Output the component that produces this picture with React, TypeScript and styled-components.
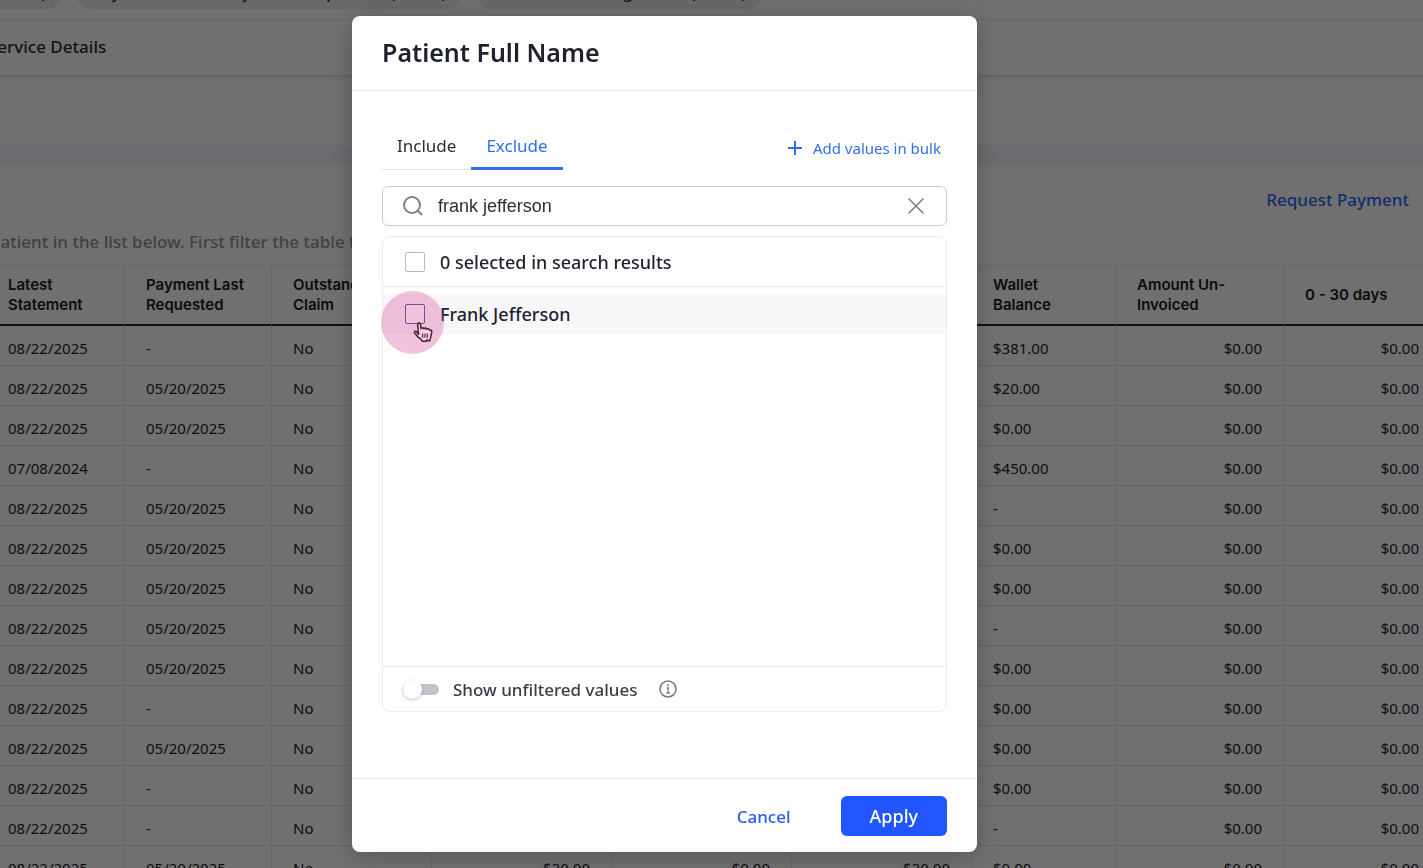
import React, { useState } from 'react';
import styled, { createGlobalStyle } from 'styled-components';

const GlobalStyle = createGlobalStyle`
  *, *::before, *::after { box-sizing: border-box; }
  html, body { margin: 0; height: 100%; }
  body {
    overflow: hidden;
    background: #fff;
    color: #1f222e;
    font-family: "Noto Sans", sans-serif;
    font-size: 15px;
  }
  button, input { font: inherit; color: inherit; }
  button { border: 0; background: none; padding: 0; cursor: pointer; }
`;

const Page = styled.div`
  height: 100vh;
  overflow: hidden;
`;

const Report = styled.main`
  margin-left: -13px;
`;

const ChipBar = styled.div`
  display: flex;
  align-items: flex-end;
  gap: 14px;
  height: 20px;
  padding-bottom: 10px;
  border-bottom: 1px solid #ececee;
`;

const Chip = styled.span`
  flex: none;
  height: 32px;
  padding: 0 15px;
  border-radius: 16px;
  background: #e9ecf1;
  font-size: 18px;
  line-height: 29px;
  white-space: nowrap;

  &:first-child {
    padding-left: 3px;
    border-radius: 0 16px 16px 0;
  }
`;

const SectionTabs = styled.nav`
  display: flex;
  align-items: center;
  height: 56px;
  padding-bottom: 2px;
  border-bottom: 1px solid #e2e2e4;
  box-shadow: 0 2px 4px rgba(0, 0, 0, 0.1);
`;

const SectionLink = styled.a`
  padding-left: 1px;
  color: #2b2e38;
  font-size: 17px;
  font-weight: 500;
  line-height: 24px;
  text-decoration: none;
`;

const Divider = styled.div`
  height: 20px;
  margin-top: 69px;
  background: #f2f4fb;
`;

const TableIntro = styled.header`
  display: flex;
  flex-direction: column;
  gap: 18px;
  padding: 23px 14px 11px 0;
`;

const RequestLink = styled.button`
  align-self: flex-end;
  color: #3563f5;
  font-size: 17px;
  font-weight: 500;
  line-height: 24px;
`;

const Hint = styled.p`
  margin: 0;
  padding-left: 3px;
  color: #949494;
  font-size: 17px;
  font-weight: 500;
  line-height: 24px;
  white-space: nowrap;
`;

const Table = styled.table`
  width: 1454px;
  table-layout: fixed;
  border-collapse: separate;
  border-spacing: 0;
  border-top: 1px solid #eaeaec;
`;

const HeadCell = styled.th`
  height: 60px;
  padding: 0 21px;
  border-right: 1px solid #e8eaed;
  border-bottom: 2px solid #222;
  color: #1c1c1c;
  font-family: Inter, sans-serif;
  font-size: 15px;
  font-weight: 600;
  line-height: 20px;
  text-align: left;
`;

const Cell = styled.td<{ $numeric?: boolean }>`
  height: 40px;
  padding: 5px 21px 0;
  border-right: 1px solid #e8eaed;
  border-bottom: 1px solid #e0e3e6;
  line-height: 20px;
  text-align: ${(p) => (p.$numeric ? 'right' : 'left')};
`;

const Backdrop = styled.div`
  position: fixed;
  inset: 0;
  display: flex;
  justify-content: center;
  padding: 16px 94px 16px 0;
  background: rgba(0, 0, 0, 0.56);
`;

const Dialog = styled.section`
  display: flex;
  flex-direction: column;
  width: 625px;
  border-radius: 8px;
  background: #fff;
  box-shadow: 0 4px 24px rgba(0, 0, 0, 0.25);
`;

const DialogHeader = styled.header`
  padding: 20px 30px 22px;
  border-bottom: 1px solid #ededf0;
`;

const DialogTitle = styled.h2`
  margin: 0;
  font-size: 25px;
  font-weight: 600;
  line-height: 32px;
`;

const DialogBody = styled.div`
  display: flex;
  flex: 1;
  flex-direction: column;
  min-height: 0;
  padding: 30px 30px 66px;
`;

const TabRow = styled.div`
  display: flex;
  align-items: flex-end;
  justify-content: space-between;
  margin-bottom: 16px;
`;

const TabList = styled.div`
  display: flex;
`;

const Tab = styled.button<{ $active: boolean }>`
  height: 49px;
  padding: 0 15px;
  box-shadow: inset 0 ${(p) => (p.$active ? '-3px #2f6fed' : '-1px #e4e5ea')};
  color: ${(p) => (p.$active ? '#2f6fed' : '#2b2e38')};
  font-size: 17px;
  line-height: 24px;
`;

const BulkButton = styled.button`
  display: flex;
  align-items: center;
  gap: 11px;
  margin: 0 6px 10px 0;
  color: #2f6fed;
  font-size: 15px;
  line-height: 24px;
`;

const SearchBox = styled.div`
  display: flex;
  flex: none;
  align-items: center;
  height: 40px;
  margin-bottom: 10px;
  padding: 0 20px 0 18px;
  border: 1px solid #c9cbd1;
  border-radius: 6px;
`;

const SearchInput = styled.input`
  flex: 1;
  min-width: 0;
  margin-left: 13px;
  padding: 0;
  border: 0;
  outline: 0;
  color: #2b2e38;
  font-family: "Liberation Sans", sans-serif;
  font-size: 18px;
`;

const ResultsPanel = styled.div`
  display: flex;
  flex: 1;
  flex-direction: column;
  min-height: 0;
  border: 1px solid #ededf0;
  border-radius: 8px;
`;

const SelectAllRow = styled.label`
  display: flex;
  align-items: center;
  gap: 15px;
  height: 50px;
  padding: 0 22px;
  border-bottom: 1px solid #ededf0;
  font-size: 18px;
  font-weight: 500;
`;

const Results = styled.ul`
  position: relative;
  flex: 1;
  margin: 0;
  padding: 7px 0 0;
  list-style: none;
`;

const ResultRow = styled.label`
  display: flex;
  align-items: center;
  gap: 15px;
  height: 40px;
  padding: 0 22px;
  background: #f7f7f9;
  font-size: 18px;
  font-weight: 500;
`;

const Checkbox = styled.input<{ $hovered?: boolean }>`
  appearance: none;
  flex: none;
  width: 20px;
  height: 20px;
  margin: 0;
  border: 1px solid ${(p) => (p.$hovered ? '#3c4796' : '#b9bbc3')};
  border-radius: 2px;
  background: #fff;

  &:checked { background: #2156ff; }
`;

const ClickHighlight = styled.li`
  position: absolute;
  top: 4px;
  left: -2px;
  width: 63px;
  height: 63px;
  padding: 30px 0 0 32px;
  border-radius: 50%;
  background: rgba(217, 83, 155, 0.35);
  pointer-events: none;
`;

const PanelFooter = styled.div`
  display: flex;
  align-items: center;
  height: 45px;
  padding: 0 20px;
  border-top: 1px solid #ededf0;
`;

const ToggleLabel = styled.label`
  display: flex;
  align-items: center;
  gap: 14px;
  margin-right: 20px;
  color: #3a3d47;
  font-size: 17px;
  font-weight: 500;
`;

const Toggle = styled.input`
  appearance: none;
  display: flex;
  align-items: center;
  width: 36px;
  height: 11px;
  margin: 0;
  border-radius: 6px;
  background: #bfc3cd;

  &::before {
    content: "";
    width: 19px;
    height: 19px;
    border-radius: 50%;
    background: #fff;
    box-shadow: 0 1px 3px rgba(40, 44, 70, 0.3);
  }
  &:checked { justify-content: flex-end; background: #2156ff; }
`;

const IconButton = styled.button`
  display: flex;
  color: #777b87;
`;

const DialogFooter = styled.footer`
  display: flex;
  justify-content: flex-end;
  gap: 24px;
  padding: 17px 30px 16px;
  border-top: 1px solid #ededf0;
`;

const FooterButton = styled.button<{ $primary?: boolean }>`
  height: 40px;
  padding: ${(p) => (p.$primary ? '0 29px' : '0 26px')};
  border-radius: 6px;
  background: ${(p) => (p.$primary ? '#2156ff' : 'transparent')};
  color: ${(p) => (p.$primary ? '#fff' : '#2a5bef')};
  font-size: ${(p) => (p.$primary ? '18px' : '17px')};
  font-weight: 500;
`;

const SearchIcon = () => (
  <svg width="24" height="24" viewBox="0 0 24 24" fill="none" stroke="#7c808c" strokeWidth="2" aria-hidden="true">
    <circle cx="11" cy="11" r="8" />
    <path d="M16.700 16.700 21 21" />
  </svg>
);

const CloseIcon = () => (
  <svg width="20" height="20" viewBox="0 0 20 20" fill="none" stroke="currentColor" strokeWidth="1.500" aria-hidden="true">
    <path d="M2.500 2.500 17.500 17.500M17.500 2.500 2.500 17.500" />
  </svg>
);

const PlusIcon = () => (
  <svg width="14" height="14" viewBox="0 0 14 14" fill="none" stroke="currentColor" strokeWidth="2" aria-hidden="true">
    <path d="M7 0v14M0 7h14" />
  </svg>
);

const InfoIcon = () => (
  <svg width="20" height="20" viewBox="0 0 20 20" fill="none" stroke="currentColor" strokeWidth="1.600" aria-hidden="true">
    <circle cx="10" cy="10" r="8" />
    <path d="M8.500 9H10.200V14M8.300 14h3.700" strokeWidth="1.300" />
    <circle cx="10" cy="6.200" r="1" fill="currentColor" stroke="none" />
  </svg>
);

const HandPointer = () => (
  <svg width="20" height="22" viewBox="0 0 20 22" fill="#f2cfe2" stroke="#4b1f3b" strokeWidth="1.500" strokeLinejoin="round" aria-hidden="true">
    <path d="M5.500 13.200 4.700 3.600C4.500 1.300 7 1 7.400 3.200L8.200 7.800C8.600 6.300 10.600 6.200 11 7.800 11.600 6.600 13.300 6.700 13.600 8.300 14.400 7.300 16.200 7.600 16.500 9.200 18 8.700 19 9.600 18.700 11.200L17.600 16.300 16.800 19.800 15 19.700 14.200 18.700 13.300 20.300H9.300L8 18.300 4.600 15.600 1.800 12.300C.6 10.500 2.400 9.500 3.700 10.800Z" />
    <path d="M9.700 12.500v4.200M12 12.500v4.200M14.300 12.500v4.200" fill="none" strokeWidth="1.100" />
  </svg>
);

const columns = [
  { label: 'Latest Statement', width: 138 },
  { label: 'Payment Last Requested', width: 147 },
  { label: 'Outstanding Claim', width: 160 },
  { label: '', width: 180, numeric: true },
  { label: '', width: 180, numeric: true },
  { label: '', width: 180, numeric: true },
  { label: 'Wallet Balance', width: 144 },
  { label: 'Amount Un-Invoiced', width: 168, numeric: true },
  { label: '0 - 30 days', width: 157, numeric: true },
];

const accounts: Array<[string, string, string, string[]?]> = [
  ['08/22/2025', '-', '$381.00'],
  ['08/22/2025', '05/20/2025', '$20.00'],
  ['08/22/2025', '05/20/2025', '$0.00'],
  ['07/08/2024', '-', '$450.00'],
  ['08/22/2025', '05/20/2025', '-'],
  ['08/22/2025', '05/20/2025', '$0.00'],
  ['08/22/2025', '05/20/2025', '$0.00'],
  ['08/22/2025', '05/20/2025', '-'],
  ['08/22/2025', '05/20/2025', '$0.00'],
  ['08/22/2025', '-', '$0.00'],
  ['08/22/2025', '05/20/2025', '$0.00'],
  ['08/22/2025', '-', '$0.00'],
  ['08/22/2025', '-', '-'],
  ['08/22/2025', '05/20/2025', '$0.00', ['$30.00', '$0.00', '$30.00']],
];

function AccountsTable() {
  return (
    <Table>
      <colgroup>
        {columns.map((c, i) => <col key={i} width={c.width} />)}
      </colgroup>
      <thead>
        <tr>{columns.map((c, i) => <HeadCell key={i} scope="col">{c.label}</HeadCell>)}</tr>
      </thead>
      <tbody>
        {accounts.map(([statement, requested, wallet, totals = ['', '', '']], r) => (
          <tr key={r}>
            {[statement, requested, 'No', ...totals, wallet, '$0.00', '$0.00'].map((value, i) => (
              <Cell key={i} $numeric={columns[i].numeric}>{value}</Cell>
            ))}
          </tr>
        ))}
      </tbody>
    </Table>
  );
}

function FilterDialog() {
  const [mode, setMode] = useState('Exclude');
  const [query, setQuery] = useState('frank jefferson');
  return (
    <Dialog role="dialog" aria-modal="true" aria-labelledby="filter-title">
      <DialogHeader>
        <DialogTitle id="filter-title">Patient Full Name</DialogTitle>
      </DialogHeader>
      <DialogBody>
        <TabRow>
          <TabList role="tablist">
            {['Include', 'Exclude'].map((name) => (
              <Tab key={name} role="tab" aria-selected={mode === name} $active={mode === name} onClick={() => setMode(name)}>
                {name}
              </Tab>
            ))}
          </TabList>
          <BulkButton><PlusIcon />Add values in bulk</BulkButton>
        </TabRow>
        <SearchBox>
          <SearchIcon />
          <SearchInput aria-label="Search values" value={query} onChange={(e) => setQuery(e.target.value)} />
          <IconButton aria-label="Clear search" onClick={() => setQuery('')}><CloseIcon /></IconButton>
        </SearchBox>
        <ResultsPanel>
          <SelectAllRow>
            <Checkbox type="checkbox" />
            0 selected in search results
          </SelectAllRow>
          <Results>
            <li>
              <ResultRow>
                <Checkbox type="checkbox" $hovered />
                Frank Jefferson
              </ResultRow>
            </li>
            <ClickHighlight aria-hidden="true"><HandPointer /></ClickHighlight>
          </Results>
          <PanelFooter>
            <ToggleLabel>
              <Toggle type="checkbox" role="switch" />
              Show unfiltered values
            </ToggleLabel>
            <IconButton aria-label="About unfiltered values"><InfoIcon /></IconButton>
          </PanelFooter>
        </ResultsPanel>
      </DialogBody>
      <DialogFooter>
        <FooterButton>Cancel</FooterButton>
        <FooterButton $primary>Apply</FooterButton>
      </DialogFooter>
    </Dialog>
  );
}

export default function App() {
  return (
    <Page>
      <GlobalStyle />
      <Report>
        <ChipBar>
          <Chip>(None)</Chip>
          <Chip>Payment Summary Contact person (None)</Chip>
          <Chip>Has Outstanding Claim (None)</Chip>
        </ChipBar>
        <SectionTabs>
          <SectionLink href="#service-details">Service Details</SectionLink>
        </SectionTabs>
        <Divider />
        <TableIntro>
          <RequestLink>Request Payment</RequestLink>
          <Hint>patient in the list below. First filter the table to</Hint>
        </TableIntro>
        <AccountsTable />
      </Report>
      <Backdrop>
        <FilterDialog />
      </Backdrop>
    </Page>
  );
}
